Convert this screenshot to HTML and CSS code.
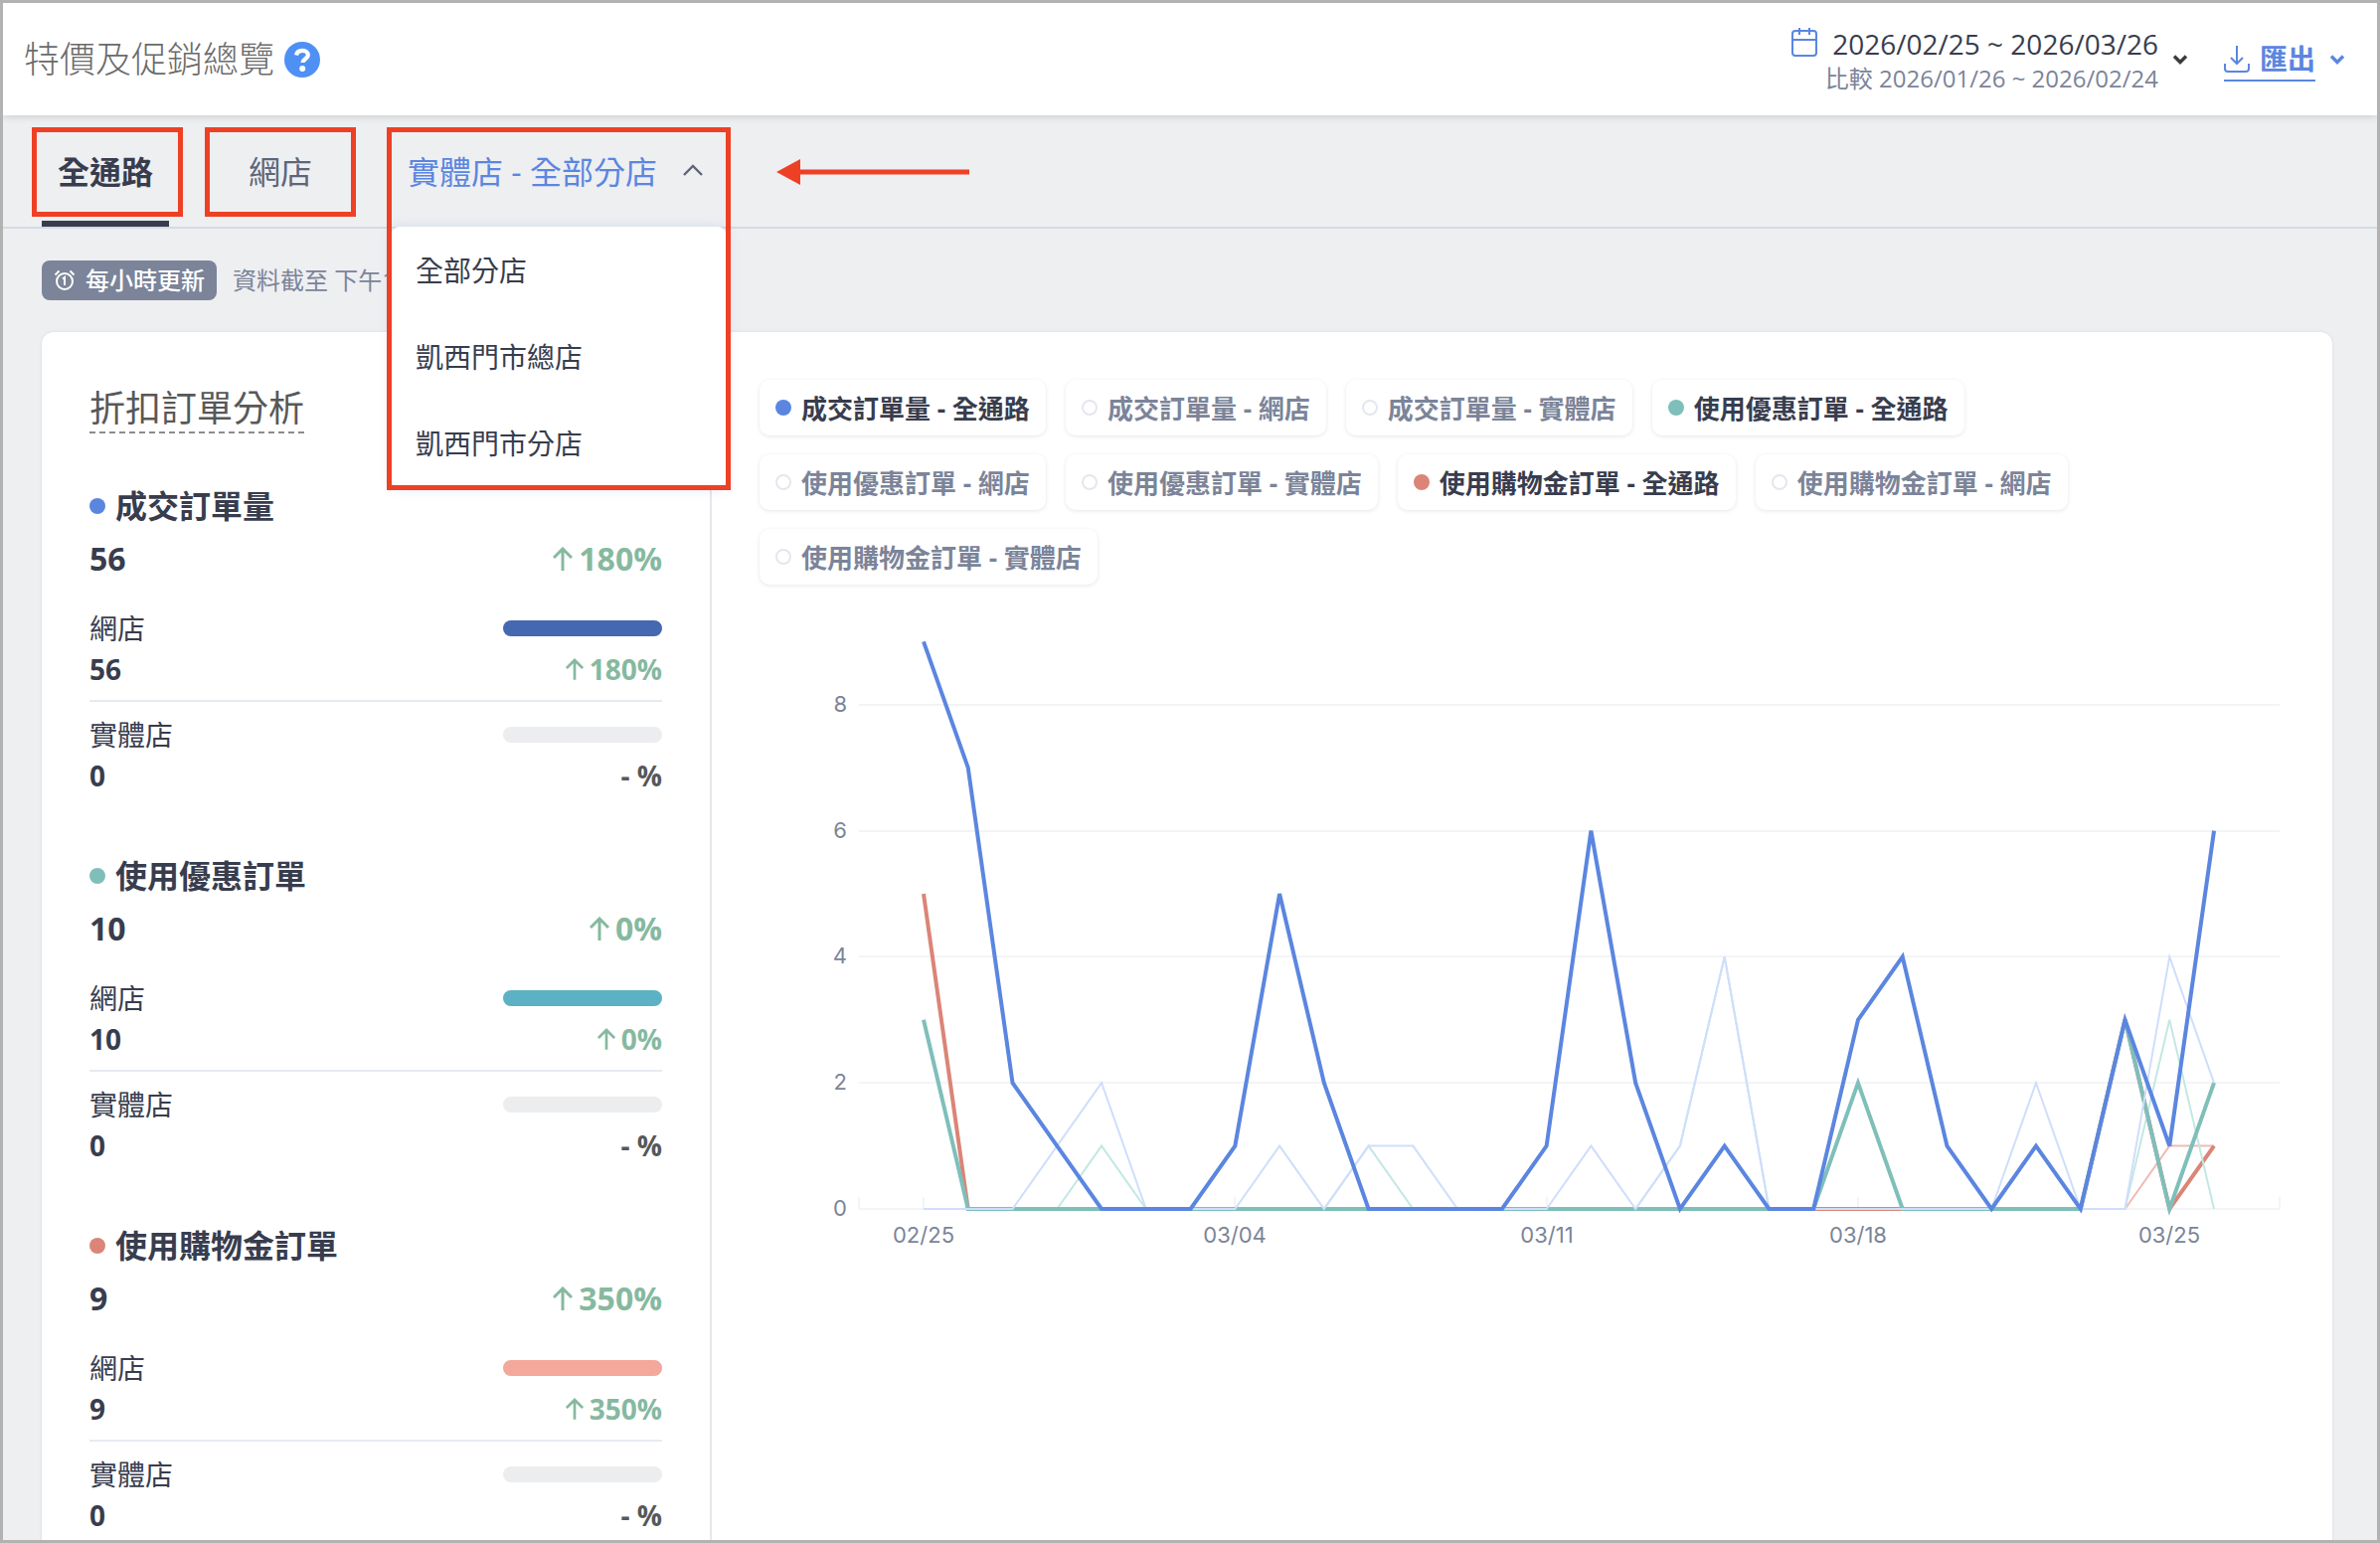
FILE: index.html
```html
<!DOCTYPE html>
<html lang="zh-Hant">
<head>
<meta charset="utf-8">
<title>特價及促銷總覽</title>
<link rel="stylesheet" href="styles.css">
</head>
<body>
<div class="window">
    <header class="header">
        <h1 class="page-title">特價及促銷總覽</h1>
        <button class="help" aria-label="說明">
            <svg width="36" height="36" viewBox="0 0 36 36">
                <circle cx="18" cy="18" r="18" fill="#4f90f5"/>
                <path d="M12 13.500c.6-3 2.900-4.700 6.200-4.700s5.600 1.800 5.600 4.500c0 3.900-5.300 4-5.300 7.700" fill="none" stroke="#fff" stroke-width="4.200"/>
                <circle cx="18.200" cy="27" r="3" fill="#fff"/>
            </svg>
        </button>
        <button class="date-range">
            <span class="dates">
                <span class="current">
                    <svg width="28" height="32" viewBox="0 0 28 32" fill="none" stroke="#5b86e0" stroke-width="2">
                        <rect x="2" y="5" width="24" height="25" rx="3"/>
                        <path d="M2 14h24M9 2v7M19 2v7"/>
                    </svg>
                    2026/02/25 ~ 2026/03/26
                </span>
                <span class="compare">比較 2026/01/26 ~ 2026/02/24</span>
            </span>
            <svg width="16" height="12" viewBox="0 0 16 12" fill="none" stroke="#3b3b3b" stroke-width="3.4"><path d="M2 2.500l6 6 6-6"/></svg>
        </button>
        <button class="export">
            <span class="export-label">
                <svg width="26" height="28" viewBox="0 0 26 28" fill="none" stroke="#5b86e0" stroke-width="2">
                    <path d="M13 1v18M7 13l6 6 6-6M1 19v5a3 3 0 0 0 3 3h18a3 3 0 0 0 3-3v-5"/>
                </svg>
                匯出
            </span>
            <svg width="16" height="12" viewBox="0 0 16 12" fill="none" stroke="#5b86e0" stroke-width="3.4"><path d="M2 2.500l6 6 6-6"/></svg>
        </button>
    </header>

    <nav class="tabs">
        <div class="tab-wrap">
            <button class="tab active">全通路</button>
            <span class="mark mark-all"></span>
        </div>
        <div class="tab-wrap">
            <button class="tab">網店</button>
            <span class="mark mark-web"></span>
        </div>
        <div class="tab-wrap store">
            <button class="tab open" aria-expanded="true">
                實體店 - 全部分店
                <svg width="22" height="14" viewBox="0 0 22 14" fill="none" stroke="#5d6579" stroke-width="2.4"><path d="M2 12l9-9 9 9"/></svg>
            </button>
            <div class="menu">
                <button>全部分店</button>
                <button>凱西門市總店</button>
                <button>凱西門市分店</button>
            </div>
            <span class="mark mark-store"></span>
            <svg class="arrow" width="194" height="26" viewBox="0 0 194 26">
                <path d="M0 13L24 0v26z" fill="#ee4025"/>
                <path d="M22 13h172" stroke="#ee4025" stroke-width="5"/>
            </svg>
        </div>
    </nav>

    <main class="content">
        <div class="status">
            <span class="badge">
                <svg width="22" height="22" viewBox="0 0 22 22" fill="none" stroke="#fff" stroke-width="2">
                    <circle cx="11" cy="12" r="8"/>
                    <path d="M1.500 5.500l4-4M20.500 5.500l-4-4M9 9.500l2-1.500v8"/>
                </svg>
                每小時更新
            </span>
            <span>資料截至 下午1:00</span>
        </div>

        <div class="card">
            <section class="summary">
                <h2>折扣訂單分析</h2>

                <div class="metric">
                    <h3><span class="dot blue"></span>成交訂單量</h3>
                    <div class="row total"><span>56</span><span class="up"><svg viewBox="0 0 20 24"><path d="M10 24V2M1 11l9-9 9 9"/></svg>180%</span></div>
                    <div class="channel">
                        <div class="row name"><span>網店</span><span class="bar"><span class="fill fill-blue" style="width: 100%"></span></span></div>
                        <div class="row value"><span>56</span><span class="up"><svg viewBox="0 0 20 24"><path d="M10 24V2M1 11l9-9 9 9"/></svg>180%</span></div>
                    </div>
                    <div class="channel">
                        <div class="row name"><span>實體店</span><span class="bar"></span></div>
                        <div class="row value"><span>0</span><span class="none">- %</span></div>
                    </div>
                </div>

                <div class="metric">
                    <h3><span class="dot teal"></span>使用優惠訂單</h3>
                    <div class="row total"><span>10</span><span class="up"><svg viewBox="0 0 20 24"><path d="M10 24V2M1 11l9-9 9 9"/></svg>0%</span></div>
                    <div class="channel">
                        <div class="row name"><span>網店</span><span class="bar"><span class="fill fill-teal" style="width: 100%"></span></span></div>
                        <div class="row value"><span>10</span><span class="up"><svg viewBox="0 0 20 24"><path d="M10 24V2M1 11l9-9 9 9"/></svg>0%</span></div>
                    </div>
                    <div class="channel">
                        <div class="row name"><span>實體店</span><span class="bar"></span></div>
                        <div class="row value"><span>0</span><span class="none">- %</span></div>
                    </div>
                </div>

                <div class="metric">
                    <h3><span class="dot red"></span>使用購物金訂單</h3>
                    <div class="row total"><span>9</span><span class="up"><svg viewBox="0 0 20 24"><path d="M10 24V2M1 11l9-9 9 9"/></svg>350%</span></div>
                    <div class="channel">
                        <div class="row name"><span>網店</span><span class="bar"><span class="fill fill-red" style="width: 100%"></span></span></div>
                        <div class="row value"><span>9</span><span class="up"><svg viewBox="0 0 20 24"><path d="M10 24V2M1 11l9-9 9 9"/></svg>350%</span></div>
                    </div>
                    <div class="channel">
                        <div class="row name"><span>實體店</span><span class="bar"></span></div>
                        <div class="row value"><span>0</span><span class="none">- %</span></div>
                    </div>
                </div>
            </section>

            <section class="trend">
                <div class="legend">
                    <button class="chip on"><span class="dot blue"></span>成交訂單量 - 全通路</button>
                    <button class="chip"><span class="dot"></span>成交訂單量 - 網店</button>
                    <button class="chip"><span class="dot"></span>成交訂單量 - 實體店</button>
                    <button class="chip on"><span class="dot teal"></span>使用優惠訂單 - 全通路</button>
                    <button class="chip"><span class="dot"></span>使用優惠訂單 - 網店</button>
                    <button class="chip"><span class="dot"></span>使用優惠訂單 - 實體店</button>
                    <button class="chip on"><span class="dot red"></span>使用購物金訂單 - 全通路</button>
                    <button class="chip"><span class="dot"></span>使用購物金訂單 - 網店</button>
                    <button class="chip"><span class="dot"></span>使用購物金訂單 - 實體店</button>
                </div>
                <svg class="chart" id="chart" viewBox="0 0 1534 650"></svg>
            </section>
        </div>
    </main>
</div>
<script>
    const left = 100;
    const right = 1529;
    const bottom = 596;
    const unit = 63.4;
    const firstX = 165;
    const step = 44.76;
    const labels = ["02/25", "03/04", "03/11", "03/18", "03/25"];

    // drawn in this order, the last one is on top
    const series = [
        { name: "red-prev", data: [0,0,0,0,0,0,0,0,0,0,0,0,0,0,0,0,0,0,0,0,0,0,0,0,0,0,0,0,1,1] },
        { name: "red-line", data: [5,0,0,0,0,0,0,0,0,0,0,0,0,0,0,0,0,0,0,0,0,0,0,0,0,0,0,3,0,1] },
        { name: "teal-prev", data: [0,0,0,0,1,0,0,0,0,0,1,0,0,0,0,0,0,1,4,0,0,0,0,0,0,0,0,0,3,0] },
        { name: "teal-line", data: [3,0,0,0,0,0,0,0,0,0,0,0,0,0,0,0,0,0,0,0,0,2,0,0,0,0,0,3,0,2] },
        { name: "blue-prev", data: [0,0,0,1,2,0,0,0,1,0,1,1,0,0,0,1,0,1,4,0,0,0,0,0,0,2,0,0,4,2] },
        { name: "blue-line", data: [9,7,2,1,0,0,0,1,5,2,0,0,0,0,1,6,2,0,1,0,0,3,4,1,0,1,0,3,1,6] }
    ];

    const pointX = (i) => firstX + i * step;
    const pointY = (v) => bottom - v * unit;

    let out = "";
    for (let v = 0; v <= 8; v += 2) {
        const y = Math.round(pointY(v));
        out += `<path class="grid" d="M${left} ${y}H${right}"/>`;
        out += `<text x="88" y="${y + 7}" text-anchor="end">${v}</text>`;
    }
    out += `<path class="grid" d="M${left} ${bottom}v-12M${right} ${bottom}v-12"/>`;
    labels.forEach((label, i) => {
        const x = Math.round(pointX(i * 7));
        out += `<path class="grid" d="M${x} ${bottom}v-12"/>`;
        out += `<text x="${x}" y="${bottom + 34}" text-anchor="middle">${label}</text>`;
    });
    series.forEach((s) => {
        const points = s.data.map((v, i) => `${pointX(i)},${pointY(v)}`).join(" ");
        out += `<polyline class="${s.name}" points="${points}"/>`;
    });
    document.querySelector("#chart").innerHTML = out;
</script>
</body>
</html>
```

FILE: styles.css
```css
* {
    box-sizing: border-box;
}
body {
    margin: 0;
    font-family: "Open Sans", "Noto Sans CJK TC", sans-serif;
    color: #383d4e;
}
h1, h2, h3 {
    margin: 0;
}
button {
    font-family: inherit;
    color: inherit;
    background: none;
    border: none;
    padding: 0;
    cursor: pointer;
}
svg {
    display: block;
    flex-shrink: 0;
}
.window {
    height: 100vh;
    overflow: hidden;
    border: 3px solid #b2b2b2;
    background-color: #eeeff1;
}

/* header */
.header {
    position: relative;
    display: flex;
    align-items: center;
    height: 113px;
    padding: 0 32px 0 21px;
    background-color: white;
    box-shadow: 0 1px 8px rgba(0, 0, 0, 0.16);
}
.page-title {
    font-size: 36px;
    font-weight: 300;
    line-height: 48px;
    color: #6b6b6b;
}
.help {
    margin-left: 10px;
}
.date-range {
    display: flex;
    align-items: center;
    gap: 14px;
    margin-left: auto;
}
.dates {
    display: flex;
    flex-direction: column;
    align-items: flex-end;
    padding-top: 3px;
}
.current {
    display: flex;
    gap: 14px;
    font-size: 28px;
    line-height: 36px;
}
.compare {
    font-size: 24px;
    line-height: 34px;
    color: #7b8499;
}
.export {
    display: flex;
    align-items: center;
    gap: 14px;
    margin-left: 36px;
    color: #5b86e0;
}
.export-label {
    display: flex;
    align-items: center;
    gap: 10px;
    border-bottom: 2px solid #5b86e0;
    font-size: 28px;
    font-weight: 700;
    line-height: 42px;
}

/* tabs */
.tabs {
    display: flex;
    gap: 64px;
    height: 114px;
    padding-left: 39px;
    border-bottom: 2px solid #d4dbe3;
}
.tab-wrap {
    position: relative;
    display: flex;
}
.tab {
    display: flex;
    align-items: center;
    justify-content: space-between;
    padding: 4px 16px 0;
    border-bottom: 6px solid transparent;
    font-size: 32px;
    color: #5d6579;
}
.tab.active {
    border-color: #383d4e;
    font-weight: 700;
    color: #383d4e;
}
.store {
    width: 336px;
}
.tab.open {
    flex: 1;
    padding-right: 22px;
    color: #5b86e0;
}
.menu {
    position: absolute;
    top: 100%;
    left: 0;
    z-index: 1;
    width: 100%;
    display: flex;
    flex-direction: column;
    border-radius: 8px;
    background-color: white;
    box-shadow: 0 2px 14px rgba(91, 134, 224, 0.24);
}
.menu button {
    height: 87px;
    padding: 0 24px 2px;
    font-size: 28px;
    text-align: left;
}
.mark {
    position: absolute;
    top: 12px;
    z-index: 2;
    height: 90px;
    border: 5px solid #ee4025;
    pointer-events: none;
}
.mark-all {
    left: -10px;
    right: -14px;
}
.mark-web {
    left: -28px;
    right: -28px;
}
.mark-store {
    left: -5px;
    right: -5px;
    height: 365px;
}
.arrow {
    position: absolute;
    top: 44px;
    left: 387px;
}

/* content */
.content {
    padding: 32px 45px 0 39px;
}
.status {
    display: flex;
    align-items: center;
    gap: 16px;
    margin-bottom: 32px;
    font-size: 24px;
    line-height: 38px;
    color: #7b8499;
}
.badge {
    display: flex;
    align-items: center;
    gap: 10px;
    height: 40px;
    padding: 0 12px;
    border-radius: 8px;
    background-color: #7b8499;
    color: white;
    font-weight: 500;
}
.card {
    display: flex;
    border-radius: 12px;
    background-color: white;
    box-shadow: 0 0 3px rgba(56, 61, 78, 0.12);
}
.summary {
    width: 674px;
    flex-shrink: 0;
    padding: 54px 48px 48px;
    border-right: 2px solid #e6e8ed;
}
.summary h2 {
    display: inline-block;
    border-bottom: 2px dashed #8c8c8c;
    font-size: 36px;
    font-weight: 400;
    line-height: 46px;
    color: #585858;
    vertical-align: top;
}
.metric {
    margin-top: 55px;
}
.summary h2 + .metric {
    margin-top: 48px;
}
.metric h3 {
    display: flex;
    align-items: center;
    gap: 10px;
    font-size: 32px;
    font-weight: 700;
    line-height: 50px;
}
.dot {
    width: 16px;
    height: 16px;
    flex-shrink: 0;
    border: 2px solid #e4e7ee;
    border-radius: 50%;
}
.dot.blue {
    border: none;
    background-color: #5b86e0;
}
.dot.teal {
    border: none;
    background-color: #7fbfba;
}
.dot.red {
    border: none;
    background-color: #da8577;
}
.row {
    display: flex;
    align-items: center;
    justify-content: space-between;
}
.total {
    font-size: 32px;
    font-weight: 700;
    line-height: 56px;
}
.channel {
    padding-top: 13px;
}
.total + .channel {
    padding: 22px 0 10px;
    border-bottom: 2px solid #e6ebf0;
}
.name {
    font-size: 28px;
    line-height: 40px;
}
.value {
    font-size: 28px;
    font-weight: 700;
    line-height: 42px;
}
.bar {
    width: 160px;
    height: 16px;
    border-radius: 8px;
    background-color: #ecedef;
}
.fill {
    display: block;
    height: 100%;
    border-radius: 8px;
}
.fill-blue {
    background-color: #4469b1;
}
.fill-teal {
    background-color: #5cb2c4;
}
.fill-red {
    background-color: #f3a89b;
}
.up {
    display: flex;
    align-items: center;
    gap: 6px;
    color: #86b99f;
}
.up svg {
    width: 20px;
    height: 24px;
    fill: none;
    stroke: #86b99f;
    stroke-width: 3;
}
.value .up svg {
    width: 18px;
    height: 22px;
}
.none {
    color: #585858;
}
.trend {
    flex: 1;
    min-width: 0;
    padding: 48px;
}
.legend {
    display: flex;
    flex-wrap: wrap;
    gap: 19px 20px;
    margin-bottom: 32px;
    padding-right: 80px;
}
.chip {
    display: flex;
    align-items: center;
    gap: 10px;
    height: 56px;
    padding: 0 16px;
    border-radius: 10px;
    box-shadow: 0 1px 4px rgba(0, 0, 0, 0.1);
    font-size: 26px;
    font-weight: 700;
    color: #7b8499;
}
.chip.on {
    color: #383d4e;
}

/* chart */
.chart {
    width: 100%;
}
.chart text {
    font-family: Inter, sans-serif;
    font-size: 22px;
    fill: #7b8499;
}
.chart polyline {
    fill: none;
    stroke-width: 2;
}
.grid {
    stroke: #f3f4f5;
    stroke-width: 2;
}
.chart .blue-line {
    stroke: #5b86e0;
    stroke-width: 4;
}
.chart .teal-line {
    stroke: #7fbfba;
    stroke-width: 4;
}
.chart .red-line {
    stroke: #da8577;
    stroke-width: 4;
}
.blue-prev {
    stroke: #cfdefb;
}
.teal-prev {
    stroke: #c3e8e4;
}
.red-prev {
    stroke: #edbdb5;
}
```
